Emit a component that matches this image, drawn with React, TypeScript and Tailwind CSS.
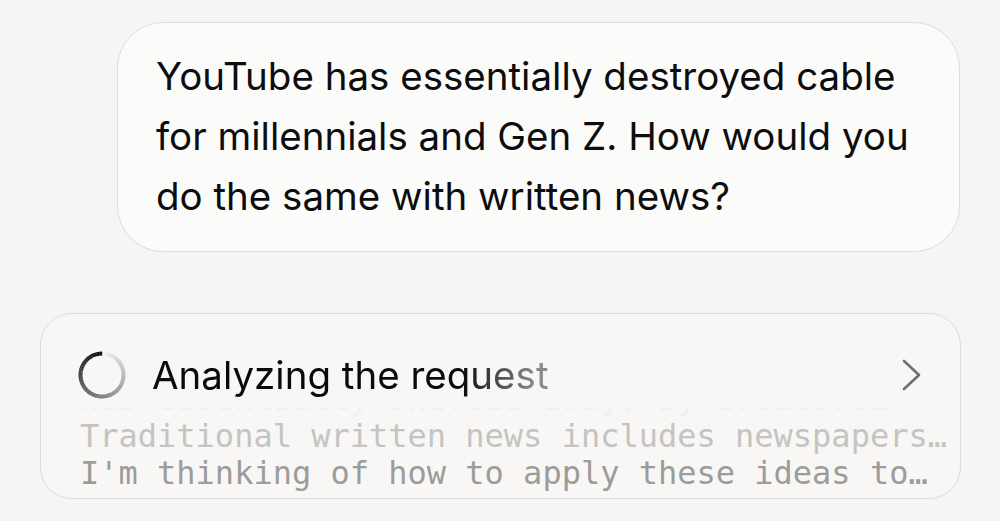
import React from "react";

const Spinner = () => {
  const n = 48;
  const r = 21.5;
  const c = 24;
  const segs = Array.from({ length: n }, (_, i) => {
    const a0 = ((8 + (i * 352) / n) * Math.PI) / 180;
    const a1 = ((8 + ((i + 1) * 352) / n + 0.6) * Math.PI) / 180;
    const x0 = c + r * Math.sin(a0);
    const y0 = c - r * Math.cos(a0);
    const x1 = c + r * Math.sin(a1);
    const y1 = c - r * Math.cos(a1);
    const t = i / (n - 1);
    const g = Math.round(236 - t * 218);
    return (
      <path
        key={i}
        d={`M${x0.toFixed(2)} ${y0.toFixed(2)} A${r} ${r} 0 0 1 ${x1.toFixed(2)} ${y1.toFixed(2)}`}
        stroke={`rgb(${g},${g},${g})`}
        strokeWidth={4}
        fill="none"
      />
    );
  });
  return (
    <svg width="48" height="48" viewBox="0 0 48 48" className="shrink-0">
      {segs}
    </svg>
  );
};

const Chevron = () => (
  <svg width="20" height="32" viewBox="0 0 20 32" className="shrink-0">
    <path
      d="M2 2 L17 16 L2 30"
      stroke="#6f6f6f"
      strokeWidth="2.6"
      strokeLinecap="round"
      strokeLinejoin="round"
      fill="none"
    />
  </svg>
);

export default function App() {
  return (
    <div className="h-[521px] w-full bg-[#f6f5f3] px-[40px] pt-[22px] font-['Inter','Noto_Sans',sans-serif] overflow-hidden">
      <div className="ml-auto w-[843px] rounded-[46px] border border-[#dedddb] bg-[#fbfbfa] px-[38px] pt-[23px] pb-[25px]">
        <p className="text-[38.5px] leading-[60px] whitespace-nowrap text-[#0d0d0d]">
          YouTube has essentially destroyed cable
          <br />
          for millennials and Gen Z. How would you
          <br />
          do the same with written news?
        </p>
      </div>

      <div className="mt-[61px] h-[186px] w-[921px] rounded-[32px] border border-[#dcdbd9] bg-[#f8f7f5] overflow-hidden">
        <div className="flex h-[48px] items-center pl-[37px] pr-[38px] mt-[37px]">
          <Spinner />
          <span className="ml-[26px] bg-[linear-gradient(90deg,#0a0a0a_0%,#0a0a0a_78%,#8a8a8a_96%)] bg-clip-text text-[38.5px] leading-[48px] text-transparent">
            Analyzing the request
          </span>
          <div className="ml-auto">
            <Chevron />
          </div>
        </div>
        <div className="mt-[9px] h-[84px] overflow-hidden pl-[39px] font-['DejaVu_Sans_Mono','Liberation_Mono',monospace] text-[32px] leading-[37px] whitespace-nowrap">
          <div className="-mt-[27px]">
            <div className="text-[#f1f0ee]">was essentially shifted away, by creators…</div>
            <div className="text-[#c4c4c2]">Traditional written news includes newspapers…</div>
            <div className="text-[#9c9c9a]">I'm thinking of how to apply these ideas to…</div>
          </div>
        </div>
      </div>
    </div>
  );
}
